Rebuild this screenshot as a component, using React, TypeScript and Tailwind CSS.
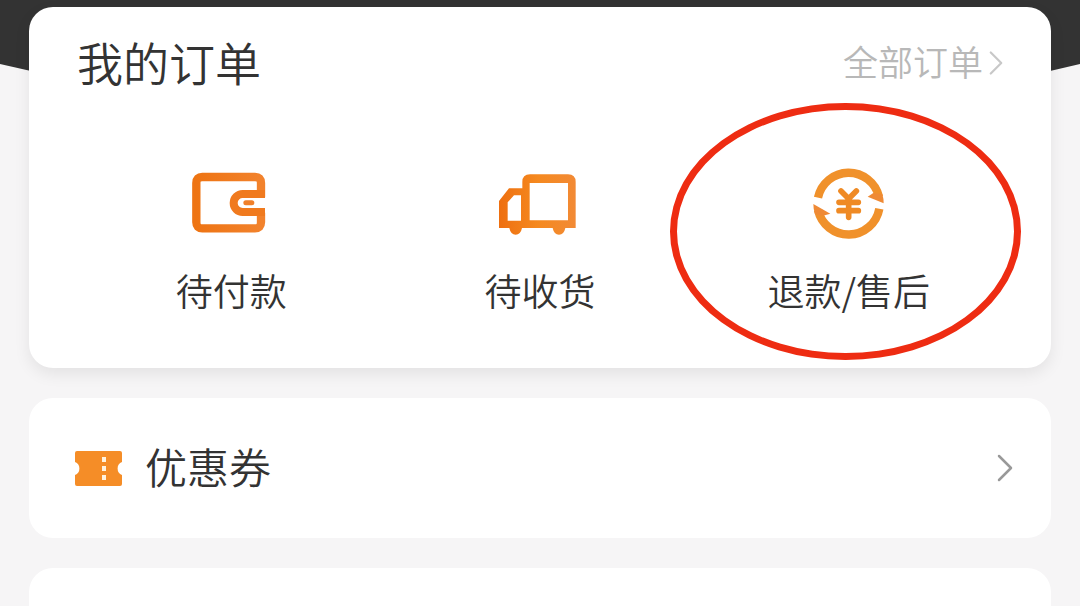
import type { ReactNode } from "react";

function WalletIcon() {
  return (
    <svg viewBox="27 24 252 216" className="h-[72px] w-[84px]" aria-hidden="true">
      <defs>
        <linearGradient id="wallet" x1="0" y1="0" x2="1" y2="0">
          <stop offset="0" stopColor="#ee7413" />
          <stop offset="1" stopColor="#f2822c" />
        </linearGradient>
      </defs>
      <path
        d="M243 112V69Q243 51 225 51H67Q49 51 49 69V187Q49 205 67 205H225Q243 205 243 187V158"
        fill="none"
        stroke="url(#wallet)"
        strokeWidth="25"
      />
      <path
        d="M255 102H188A27 27 0 0 0 188 156H255"
        fill="none"
        stroke="#f07a1e"
        strokeWidth="24"
      />
      <rect x="190" y="121" width="33" height="15" rx="7.5" fill="#f0802a" />
    </svg>
  );
}

function TruckIcon() {
  return (
    <svg viewBox="24 24 252 216" className="h-[72px] w-[84px]" aria-hidden="true">
      <defs>
        <linearGradient id="truck" x1="0" y1="0" x2="1" y2="0">
          <stop offset="0" stopColor="#ee6f10" />
          <stop offset="0.5" stopColor="#f5891f" />
          <stop offset="1" stopColor="#f28a35" />
        </linearGradient>
      </defs>
      <path
        fill="url(#truck)"
        fillRule="evenodd"
        d="M97 85V66Q97 43 120 43H234Q257 43 257 66V204H226Q222 224 207 224Q192 224 188 204H96Q92 224 77 224Q62 224 58 204H27V123L57 85ZM119 69V181H234V69ZM72 106L53 127V182H93V106Z"
      />
    </svg>
  );
}

function RefundIcon() {
  return (
    <svg viewBox="20 39 252 216" className="h-[72px] w-[84px] overflow-visible" aria-hidden="true">
      <g fill="none" stroke="#f0912b" strokeWidth="25">
        <path d="M53 128A94 95 0 0 1 236 125" />
        <path d="M53 165A94 95 0 0 0 237 161" />
      </g>
      <g fill="#ef8a35">
        <path d="M250 145L202 125L219 114L246 118Q250 130 250 145Z" />
        <path d="M39 147L90 176L68 182L44 178Q39 162 39 147Z" />
      </g>
      <path
        d="M122 108L145 131L168 108M116 142H174M116 167H174M145 133V187"
        fill="none"
        stroke="#ef8a24"
        strokeWidth="17"
        strokeLinecap="round"
      />
    </svg>
  );
}

function CouponIcon() {
  return (
    <svg viewBox="0 0 49 37" className="h-[37px] w-[49px]" aria-hidden="true">
      <path
        d="M3 1H46Q48 1 48 3V12A7 7 0 0 0 48 25V34Q48 36 46 36H3Q1 36 1 34V25A7 7 0 0 0 1 12V3Q1 1 3 1Z"
        fill="#f58d27"
      />
      <path d="M30 7V12M30 16V21M30 25V30" stroke="#fff3df" strokeWidth="4" strokeLinecap="butt" />
    </svg>
  );
}

function Chevron({ className }: { className: string }) {
  return (
    <svg viewBox="0 0 16 28" fill="none" stroke="currentColor" className={className} aria-hidden="true">
      <path d="M2 2L14 14L2 26" strokeWidth="2.5" strokeLinecap="round" strokeLinejoin="round" />
    </svg>
  );
}

type OrderItem = {
  label: string;
  icon: ReactNode;
  marked?: boolean;
};

const items: OrderItem[] = [
  { label: "待付款", icon: <WalletIcon /> },
  { label: "待收货", icon: <TruckIcon /> },
  { label: "退款/售后", icon: <RefundIcon />, marked: true },
];

export default function App() {
  return (
    <main className="relative flex h-screen flex-col gap-[30px] overflow-hidden bg-[#f6f5f6] px-[29px] pt-[7px] font-['Noto_Sans_CJK_SC',sans-serif] font-[350] text-[#333]">
      <svg
        viewBox="0 0 1080 130"
        preserveAspectRatio="none"
        className="absolute left-0 top-0 h-[130px] w-full"
        aria-hidden="true"
      >
        <path d="M0 0H1080V64Q540 194 0 64Z" fill="#333" />
      </svg>

      <section className="relative shrink-0 rounded-3xl bg-white px-12 pb-14 pt-[22px] shadow-[0_6px_16px_rgba(0,0,0,0.08)]">
        <div className="flex items-center justify-between">
          <h1 className="text-[46px] font-[350] leading-[64px]">我的订单</h1>
          <a href="#orders" className="flex items-center gap-1.5 text-[35px] leading-[64px] text-[#b8b8b8]">
            全部订单
            <Chevron className="mt-1 h-7 w-3.5 text-[#c8c8c8]" />
          </a>
        </div>
        <div className="mt-[75px] grid grid-cols-3">
          {items.map((item) => (
            <div key={item.label} className="relative">
              <button type="button" className="flex w-full flex-col items-center gap-7">
                {item.icon}
                <span className="text-[37px] font-[350] leading-[44px]">{item.label}</span>
              </button>
              {item.marked && (
                <span className="pointer-events-none absolute -bottom-12 -left-6 -right-[18px] -top-[65px] rounded-[50%] border-[7px] border-[#ee2c12]" />
              )}
            </div>
          ))}
        </div>
      </section>

      <a
        href="#coupons"
        className="relative flex h-[140px] shrink-0 items-center rounded-3xl bg-white pl-[45px] pr-[38px]"
      >
        <CouponIcon />
        <span className="ml-[22px] pb-1 text-[42px] leading-[60px]">优惠券</span>
        <Chevron className="ml-auto h-7 w-4 text-[#999]" />
      </a>

      <section className="relative flex-1 rounded-t-3xl bg-white" />
    </main>
  );
}
